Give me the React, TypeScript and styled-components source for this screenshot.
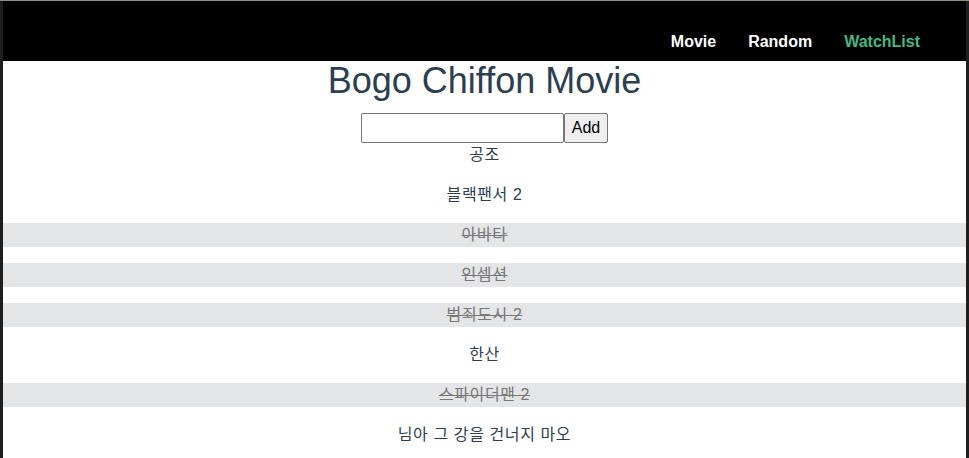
import React from "react";
import styled, { createGlobalStyle, css } from "styled-components";

const GlobalStyle = createGlobalStyle`
  html, body {
    margin: 0;
    padding: 0;
    background: #1f1f1f;
  }
  body {
    font-family: "Liberation Sans", Arial, "Noto Sans CJK KR", sans-serif;
  }
`;

const Frame = styled.div`
  display: flex;
  padding: 0 3px;
  border-top: 1px solid #86957d;
  min-height: 457px;
`;

const Page = styled.div`
  flex: 1;
  background: #fff;
  display: flex;
  flex-direction: column;
  color: #2c3e50;
  -webkit-font-smoothing: antialiased;
`;

const Header = styled.nav`
  height: 60px;
  box-sizing: border-box;
  background: #000;
  display: flex;
  justify-content: flex-end;
  align-items: flex-end;
  padding: 0 30px 10px;
`;

const NavLink = styled.a<{ $active?: boolean }>`
  padding: 0 16px;
  font-family: "Liberation Sans", Arial, sans-serif;
  font-weight: bold;
  font-size: 16px;
  line-height: 18px;
  text-decoration: none;
  color: ${(p) => (p.$active ? "#42b983" : "#ffffff")};
`;

const Title = styled.h1`
  margin: 0 0 12px;
  font-size: 36px;
  line-height: 40px;
  font-weight: normal;
  text-align: center;
  color: #2c3e50;
`;

const Form = styled.div`
  display: flex;
  justify-content: center;
  height: 30px;
`;

const Input = styled.input`
  width: 203px;
  height: 30px;
  box-sizing: border-box;
  border: 1px solid #767676;
  border-radius: 2px;
  padding: 1px 2px;
  margin: 0;
  font-size: 16px;
`;

const Button = styled.button`
  width: 44px;
  height: 30px;
  box-sizing: border-box;
  border: 1px solid #767676;
  border-radius: 2px;
  background: #efefef;
  color: #000;
  margin: 0;
  padding: 0;
  font-family: "Liberation Sans", Arial, sans-serif;
  font-size: 16px;
`;

const List = styled.div`
  display: flex;
  flex-direction: column;
  gap: 16px;
`;

const Item = styled.div<{ $done?: boolean }>`
  height: 24px;
  line-height: 24px;
  text-align: center;
  font-size: 16px;
  letter-spacing: 0.6px;
  font-family: "Liberation Sans", Arial, "Noto Sans CJK KR", sans-serif;
  color: #2c3e50;
  ${(p) =>
    p.$done &&
    css`
      background: #e4e5e7;
      color: #777777;
      text-decoration: line-through;
    `}
`;

const movies: { title: string; done: boolean }[] = [
  { title: "공조", done: false },
  { title: "블랙팬서 2", done: false },
  { title: "아바타", done: true },
  { title: "인셉션", done: true },
  { title: "범죄도시 2", done: true },
  { title: "한산", done: false },
  { title: "스파이더맨 2", done: true },
  { title: "님아 그 강을 건너지 마오", done: false },
];

export default function App() {
  return (
    <>
      <GlobalStyle />
      <Frame>
        <Page>
          <Header>
            <NavLink href="#">Movie</NavLink>
            <NavLink href="#">Random</NavLink>
            <NavLink href="#" $active>
              WatchList
            </NavLink>
          </Header>
          <Title>Bogo Chiffon Movie</Title>
          <Form>
            <Input type="text" />
            <Button>Add</Button>
          </Form>
          <List>
            {movies.map((m) => (
              <Item key={m.title} $done={m.done}>
                {m.title}
              </Item>
            ))}
          </List>
        </Page>
      </Frame>
    </>
  );
}
